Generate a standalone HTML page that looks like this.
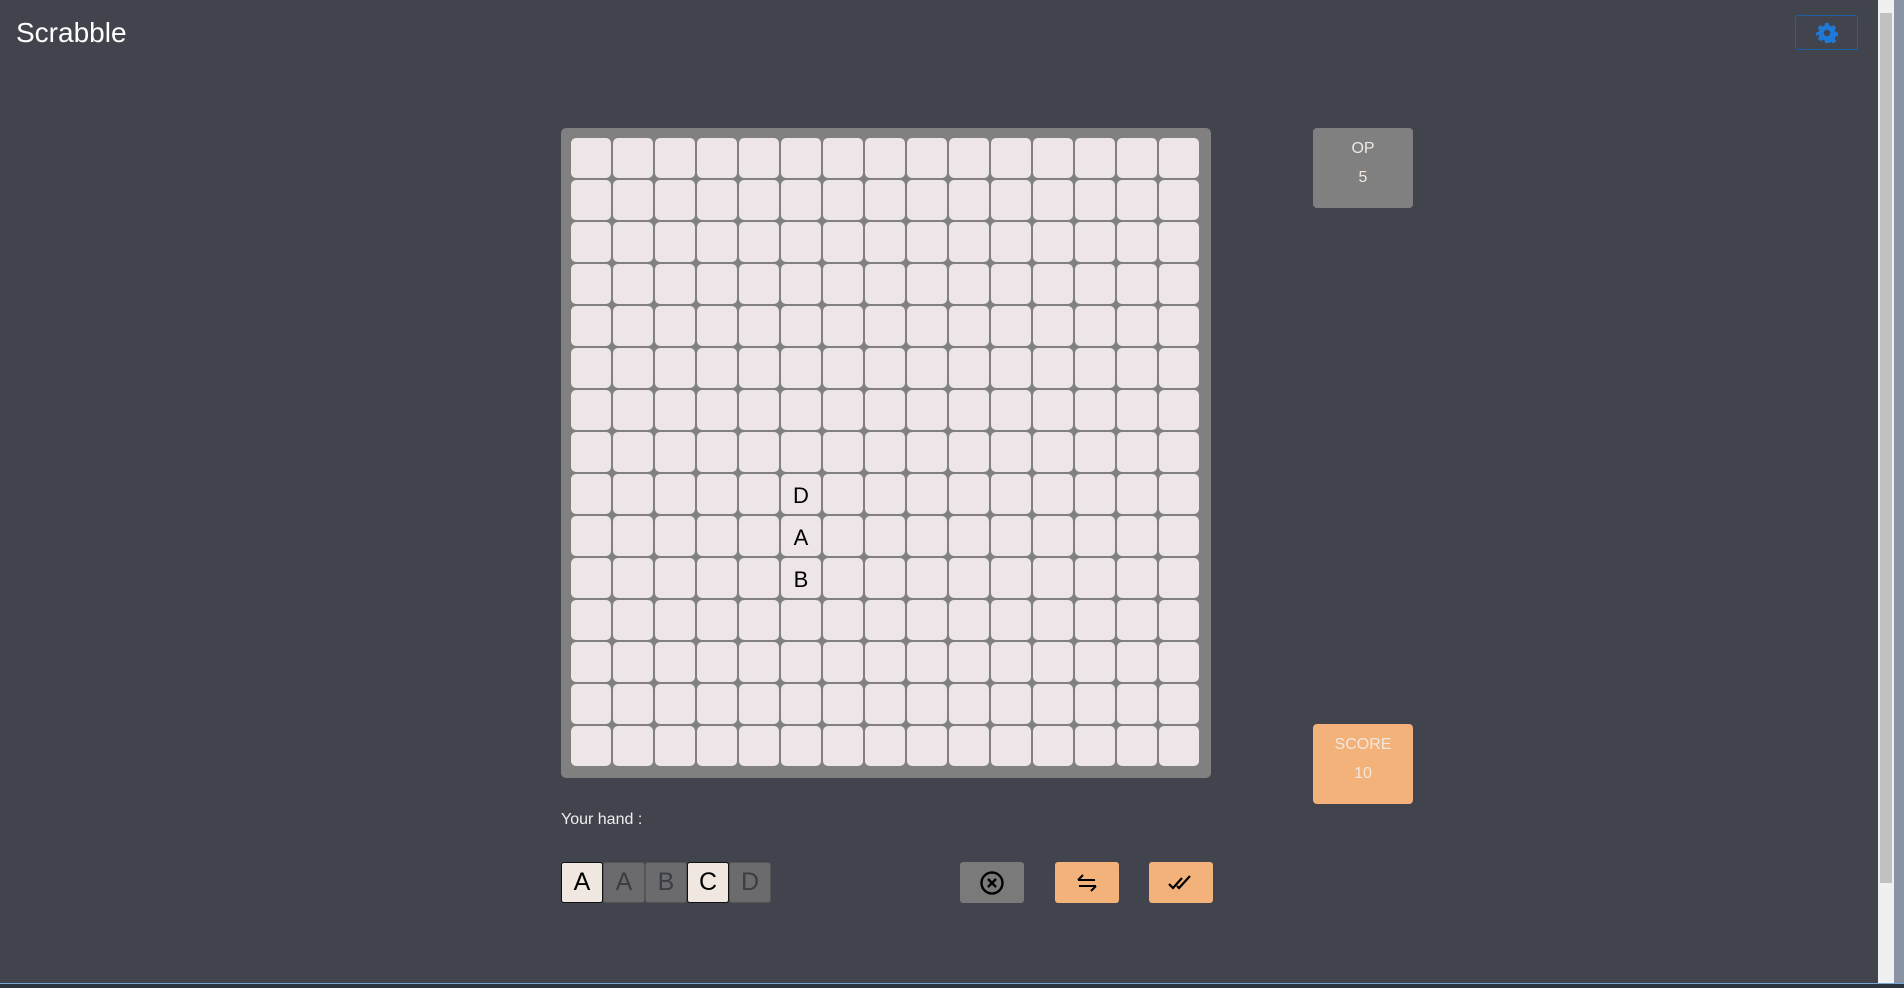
<!DOCTYPE html>
<html><head><meta charset="utf-8"><style>
*{margin:0;padding:0;box-sizing:border-box}
body{width:1904px;height:988px;background:#41444d;font-family:"Liberation Sans",sans-serif;position:relative;overflow:hidden}
.title{position:absolute;left:16px;top:17px;font-size:28px;color:#fff}
.set{position:absolute;left:1795px;top:15px;width:63px;height:35px;border:1px solid #1f5fa8;border-radius:3px;display:flex;align-items:center;justify-content:center}
.board{position:absolute;left:561px;top:128px;width:650px;height:650px;background:#808080;border-radius:5px;padding:10px}
.grid{display:grid;grid-template-columns:repeat(15,40px);grid-auto-rows:40px;gap:2px}
.c{background:#ede5e8;border-radius:5px;display:flex;align-items:center;justify-content:center;font-size:22px;color:#000;padding-top:3px}
.box{position:absolute;left:1313px;width:100px;height:80px;border-radius:4px;color:#f0e8e0;font-size:16px;text-align:center;line-height:29px;padding-top:6px}
.hand{position:absolute;left:561px;top:811px;color:#eee;font-size:16px}
.t{position:absolute;top:862px;width:42px;height:41px;border-radius:3px;display:flex;align-items:center;justify-content:center;font-size:25px}
.l{background:#f0e8e0;border:1px solid #111;color:#000}
.g{background:#6b6b6e;border:1px solid #555;color:#3b3d44}
.b{position:absolute;top:862px;width:64px;height:41px;border-radius:3px;display:flex;align-items:center;justify-content:center}
</style></head><body>
<div class="title">Scrabble</div>
<div class="set"><svg width="22" height="22" viewBox="0 0 24 24"><path fill="#1e78d8" d="M10 1h4l.6 3 2 1 2.6-1.6 2.8 2.8L20.4 8.8l.8 2 2.8.6v4l-2.8.6-.8 2 1.6 2.6-2.8 2.8-2.6-1.6-2 .8L14 23h-4l-.6-2.8-2-.8-2.6 1.6-2.8-2.8 1.6-2.6-.8-2L0 15.4v-4l2.8-.6.8-2L2 6.2 4.8 3.4 7.4 5l2-1zM12 8.5a3.5 3.5 0 1 0 0 7 3.5 3.5 0 0 0 0-7z"/></svg></div>
<div class="board"><div class="grid" id="g"></div></div>
<div class="box" style="top:128px;background:#808080">OP<br>5</div>
<div class="box" style="top:724px;background:#f3b27a">SCORE<br>10</div>
<div class="hand">Your hand :</div>
<div class="t l" style="left:561px">A</div>
<div class="t g" style="left:603px">A</div>
<div class="t g" style="left:645px">B</div>
<div class="t l" style="left:687px">C</div>
<div class="t g" style="left:729px">D</div>
<div class="b" style="left:960px;background:#7a7a7a"><svg width="26" height="26" viewBox="0 0 26 26" fill="none" stroke="#000" stroke-width="2.4"><circle cx="13" cy="13" r="10.5"/><path d="M9 9l8 8M17 9l-8 8"/></svg></div>
<div class="b" style="left:1055px;background:#f3b27a"><svg width="26" height="26" viewBox="0 0 26 26" fill="none" stroke="#000" stroke-width="2"><path d="M4 10h17M4 10l5-5M22 16H5M22 16l-5 5"/></svg></div>
<div class="b" style="left:1149px;background:#f3b27a"><svg width="30" height="26" viewBox="0 0 30 26" fill="none" stroke="#000" stroke-width="2.2"><path d="M3 14l4 4 9-10M11 16l2 2 11-12"/></svg></div>
<div style="position:absolute;left:1878px;top:0;width:16px;height:983px;background:#f0f0f0"><div style="position:absolute;left:2px;top:13px;width:12px;height:870px;background:#c1c1c1"></div></div>
<div style="position:absolute;left:1894px;top:0;width:10px;height:988px;background:#8a93a3"></div>
<div style="position:absolute;left:0;top:983px;width:1904px;height:5px;background:#2b3340;border-top:1px solid #7aa6d8"></div>
<script>
var g=document.getElementById('g'),h='';
for(var r=0;r<15;r++)for(var c=0;c<15;c++){var t='';if(c==5){if(r==8)t='D';if(r==9)t='A';if(r==10)t='B';}h+='<div class="c">'+t+'</div>';}
g.innerHTML=h;
</script>
</body></html>
